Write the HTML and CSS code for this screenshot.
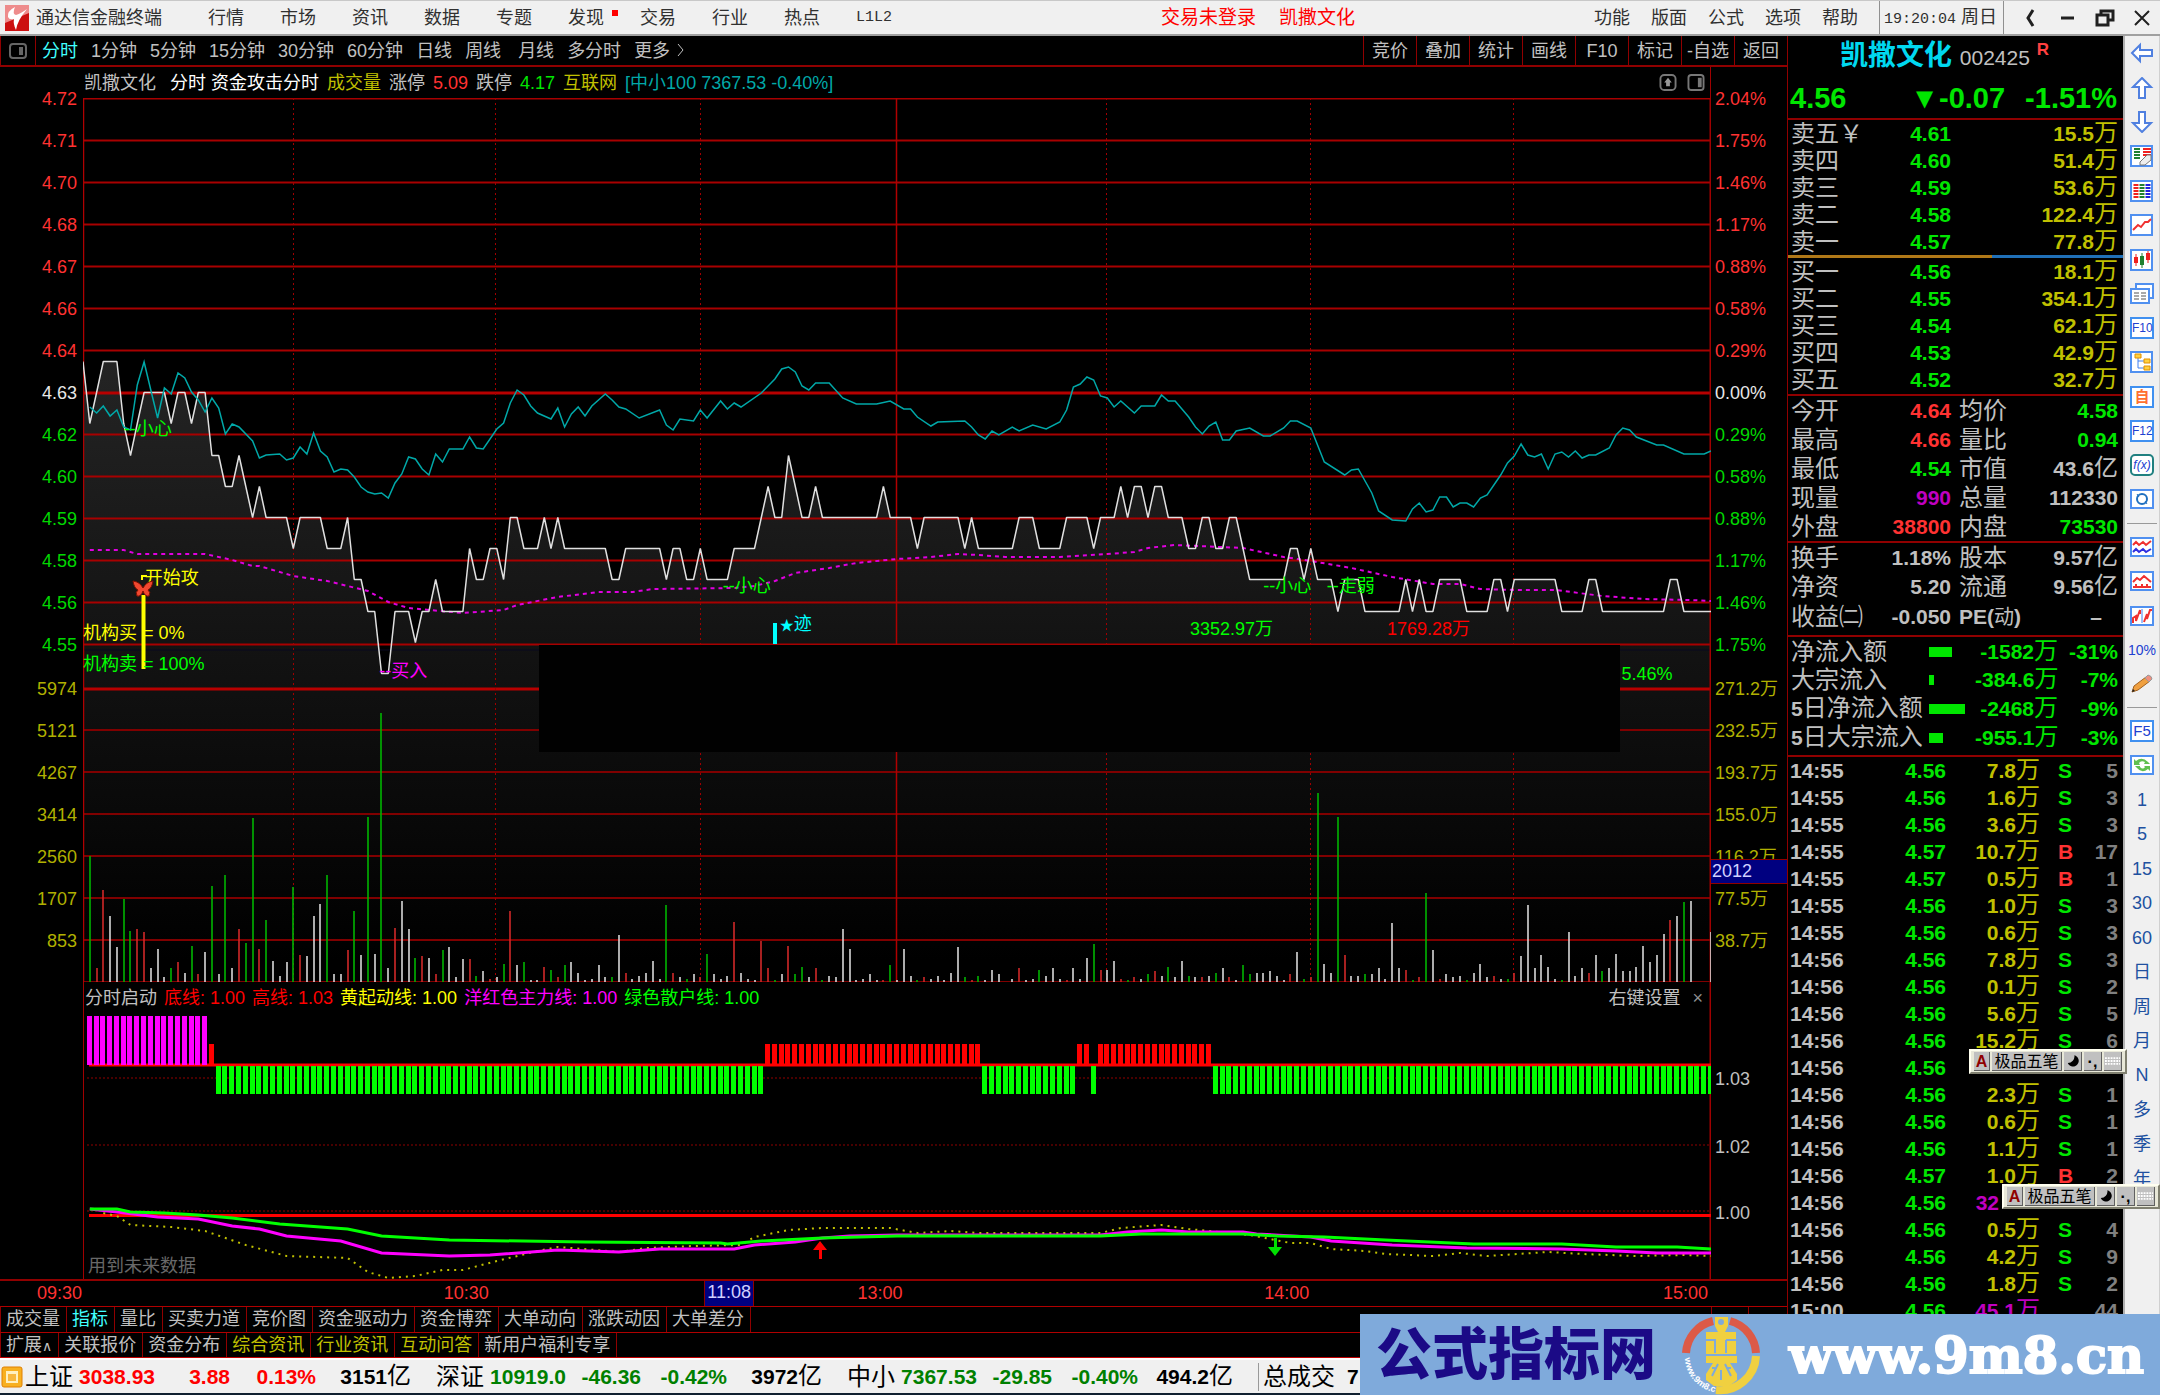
FILE: index.html
```html
<!DOCTYPE html>
<html lang="zh-CN">
<head>
<meta charset="utf-8">
<title>通达信金融终端</title>
<link rel="stylesheet" href="styles.css">
</head>
<body>
<header class="titlebar">
  <svg class="logo" viewBox="0 0 24 26" aria-hidden="true"><rect width="24" height="26" fill="#e04040"/><path d="M0 0H24V12L0 20Z" fill="#ee8c8c"/><path d="M0 18L24 8V26H0Z" fill="#cc1010"/><path d="M10 2Q2 6 3 12Q4 15 9 14Q8 19 11 25Q12 16 22 4Q15 9 11 10Q7 9 10 2Z" fill="#fff"/></svg>
  <h1 class="app-name">通达信金融终端</h1>
  <nav class="menu">
    <a href="#">行情</a><a href="#">市场</a><a href="#">资讯</a><a href="#">数据</a><a href="#">专题</a><a href="#" class="has-dot">发现</a><a href="#">交易</a><a href="#">行业</a><a href="#">热点</a><a href="#" class="mono">L1L2</a>
  </nav>
  <p class="login"><a href="#">交易未登录</a><a href="#">凯撒文化</a></p>
  <nav class="menu menu-right">
    <a href="#">功能</a><a href="#">版面</a><a href="#">公式</a><a href="#">选项</a><a href="#">帮助</a>
  </nav>
  <p class="clock"><span class="mono">19:20:04</span> 周日</p>
  <div class="window-buttons">
    <button aria-label="后退"><svg viewBox="0 0 20 20"><path d="M12 2L7 10L12 18" stroke-width="3"/></svg></button>
    <button aria-label="最小化"><svg viewBox="0 0 20 20"><path d="M3 10H16" stroke-width="3"/></svg></button>
    <button aria-label="还原"><svg viewBox="0 0 20 20"><path d="M6 6V3H18V12H14M2 7H13V17H2Z" stroke-width="3"/></svg></button>
    <button aria-label="关闭"><svg viewBox="0 0 20 20"><path d="M3 3L17 17M17 3L3 17" stroke-width="2"/></svg></button>
  </div>
</header>

<div class="workspace">
  <main class="charts">
    <nav class="periods">
      <button class="panel-toggle" aria-label="侧栏"><svg viewBox="0 0 18 16"><rect x="1" y="1" width="16" height="14" rx="3" fill="none" stroke="#666" stroke-width="2"/><rect x="10" y="4" width="4" height="8" fill="#666"/></svg></button>
      <div class="period-list">
        <button class="active">分时</button><button>1分钟</button><button>5分钟</button><button>15分钟</button><button>30分钟</button><button>60分钟</button><button>日线</button><button>周线</button><button>月线</button><button>多分时</button><button>更多<svg class="more" viewBox="0 0 9 14"><path d="M2 1L7 7L2 13" fill="none" stroke="#c0c0c0"/></svg></button>
      </div>
      <div class="chart-actions">
        <button>竞价</button><button>叠加</button><button>统计</button><button>画线</button><button>F10</button><button>标记</button><button>-自选</button><button>返回</button>
      </div>
    </nav>

    <div class="price-chart">
      <div class="axis axis-left">
        <ol class="up"><li>4.72</li><li>4.71</li><li>4.70</li><li>4.68</li><li>4.67</li><li>4.66</li><li>4.64</li><li class="flat">4.63</li><li class="down">4.62</li><li class="down">4.60</li><li class="down">4.59</li><li class="down">4.58</li><li class="down">4.56</li><li class="down">4.55</li></ol>
        <ol class="volume"><li>5974</li><li>5121</li><li>4267</li><li>3414</li><li>2560</li><li>1707</li><li>853</li></ol>
      </div>
      <div class="plot-column">
        <div class="info">
          <span class="stock">凯撒文化</span><span class="white">分时 资金攻击分时</span><span class="olive">成交量</span><span>涨停</span><span class="red">5.09</span><span>跌停</span><span class="green">4.17</span><span class="olive">互联网</span><span class="teal">[中小100 7367.53 -0.40%]</span>
          <span class="info-icons">
            <svg viewBox="0 0 18 18"><rect x="1" y="1" width="16" height="16" rx="4" fill="none" stroke="#777" stroke-width="2"/><path d="M9 4L13 9H11V13H7V9H5Z" fill="#999"/></svg>
            <svg viewBox="0 0 18 18"><rect x="1" y="1" width="16" height="16" rx="3" fill="none" stroke="#777" stroke-width="2"/><rect x="11" y="4" width="4" height="10" fill="#777"/></svg>
          </span>
        </div>
        <div class="plot">
          <svg id="price-plot" viewBox="83 98 1628 884" preserveAspectRatio="none" role="img" aria-label="分时走势与成交量">
            <defs><linearGradient id="shade" gradientUnits="userSpaceOnUse" x1="0" y1="361" x2="0" y2="960"><stop offset="0" stop-color="#242424"/><stop offset="1" stop-color="#000"/></linearGradient></defs>
          </svg>
          <div class="hidden-block"></div>
          <span class="note lime n1">--小心</span>
          <span class="note yellow n2">开始攻</span>
          <span class="note yellow n3">机构买<b></b>= 0%</span>
          <span class="note lime n4">机构卖<b></b>= 100%</span>
          <span class="note magenta n5">--买入</span>
          <span class="note lime n6">--小心</span>
          <span class="note cyan n7"><small>★</small>迹</span>
          <span class="note lime n8">--小心</span>
          <span class="note lime n9">--走弱</span>
          <span class="note lime n10">3352.97万</span>
          <span class="note signal n11">1769.28万</span>
          <span class="note lime n12">5.46%</span>
          <svg class="butterfly" viewBox="0 0 22 18"><path d="M1 1Q8 2 11 8Q14 2 21 1Q20 8 16 10Q19 12 17 16Q13 17 11 11Q9 17 5 16Q3 12 6 10Q2 8 1 1Z" fill="#f04830" stroke="#801000"/></svg>
        </div>
      </div>
      <div class="axis axis-right">
        <ol class="up"><li>2.04%</li><li>1.75%</li><li>1.46%</li><li>1.17%</li><li>0.88%</li><li>0.58%</li><li>0.29%</li><li class="flat">0.00%</li><li class="down">0.29%</li><li class="down">0.58%</li><li class="down">0.88%</li><li class="down">1.17%</li><li class="down">1.46%</li><li class="down">1.75%</li></ol>
        <ol class="volume"><li>271.2万</li><li>232.5万</li><li>193.7万</li><li>155.0万</li><li>116.2万</li><li>77.5万</li><li>38.7万</li></ol>
        <span class="cursor-value">2012</span>
      </div>
    </div>

    <div class="indicator">
      <div class="indicator-axis"></div>
      <div class="indicator-plot">
        <svg id="indicator-plot" viewBox="83 982 1628 297" preserveAspectRatio="none" role="img" aria-label="分时启动"></svg>
        <div class="indicator-head">
          <span>分时启动</span><span class="signal">底线: 1.00</span><span class="signal">高线: 1.03</span><span class="yellow">黄起动线: 1.00</span><span class="magenta">洋红色主力线: 1.00</span><span class="lime">绿色散户线: 1.00</span>
          <span class="settings">右键设置</span><button class="close" aria-label="关闭指标">×</button>
        </div>
        <span class="future">用到未来数据</span>
      </div>
      <div class="indicator-axis scale"><span class="s1">1.03</span><span class="s2">1.02</span><span class="s3">1.00</span></div>
    </div>

    <div class="times"><span>09:30</span><span>10:30</span><span>13:00</span><span>14:00</span><span>15:00</span><i></i><span class="cursor-time">11:08</span></div>

    <nav class="tabs"><button>成交量</button><button class="active">指标</button><button>量比</button><button>买卖力道</button><button>竞价图</button><button>资金驱动力</button><button>资金博弈</button><button>大单动向</button><button>涨跌动因</button><button>大单差分</button><i class="tab-end"></i></nav>
    <nav class="tabs"><button>扩展<span class="caret">∧</span></button><button>关联报价</button><button>资金分布</button><button class="olive">综合资讯</button><button class="olive">行业资讯</button><button class="olive">互动问答</button><button>新用户福利专享</button></nav>
  </main>

  <aside class="quote">
    <header class="quote-head">
      <h2>凯撒文化 <small>002425</small><sup>R</sup></h2>
      <p><span>4.56</span><span class="change">▼-0.07</span><span>-1.51%</span></p>
    </header>
    <table class="book sell">
      <tr><th>卖五￥</th><td>4.61</td><td>15.5<i>万</i></td></tr>
      <tr><th>卖四</th><td>4.60</td><td>51.4<i>万</i></td></tr>
      <tr><th>卖三</th><td>4.59</td><td>53.6<i>万</i></td></tr>
      <tr><th>卖二</th><td>4.58</td><td>122.4<i>万</i></td></tr>
      <tr><th>卖一</th><td>4.57</td><td>77.8<i>万</i></td></tr>
    </table>
    <div class="balance"></div>
    <table class="book buy">
      <tr><th>买一</th><td>4.56</td><td>18.1<i>万</i></td></tr>
      <tr><th>买二</th><td>4.55</td><td>354.1<i>万</i></td></tr>
      <tr><th>买三</th><td>4.54</td><td>62.1<i>万</i></td></tr>
      <tr><th>买四</th><td>4.53</td><td>42.9<i>万</i></td></tr>
      <tr><th>买五</th><td>4.52</td><td>32.7<i>万</i></td></tr>
    </table>
    <div class="block">
      <table class="stats">
        <tr><th>今开</th><td class="red">4.64</td><th>均价</th><td class="green">4.58</td></tr>
        <tr><th>最高</th><td class="red">4.66</td><th>量比</th><td class="green">0.94</td></tr>
        <tr><th>最低</th><td class="green">4.54</td><th>市值</th><td>43.6<i>亿</i></td></tr>
        <tr><th>现量</th><td class="purple">990</td><th>总量</th><td>112330</td></tr>
        <tr><th>外盘</th><td class="red">38800</td><th>内盘</th><td class="green">73530</td></tr>
      </table>
    </div>
    <div class="block finance">
      <table class="stats">
        <tr><th>换手</th><td>1.18%</td><th>股本</th><td>9.57<i>亿</i></td></tr>
        <tr><th>净资</th><td>5.20</td><th>流通</th><td>9.56<i>亿</i></td></tr>
        <tr><th>收益㈡</th><td>-0.050</td><th><b>PE(</b><small>动</small><b>)</b></th><td><span class="dash">–</span></td></tr>
      </table>
    </div>
    <div class="block flow-block">
      <table class="flow">
        <tr><th>净流入额</th><td><span class="bar" style="width:23px"></span></td><td>-1582<i>万</i></td><td>-31%</td></tr>
        <tr><th>大宗流入</th><td><span class="bar" style="width:5px"></span></td><td>-384.6<i>万</i></td><td>-7%</td></tr>
        <tr><th><b>5</b>日净流入额</th><td><span class="bar" style="width:36px"></span></td><td>-2468<i>万</i></td><td>-9%</td></tr>
        <tr><th><b>5</b>日大宗流入</th><td><span class="bar" style="width:14px"></span></td><td>-955.1<i>万</i></td><td>-3%</td></tr>
      </table>
    </div>
    <table class="ticks">
      <tr><td>14:55</td><td>4.56</td><td>7.8<i>万</i></td><td>S</td><td>5</td></tr>
      <tr><td>14:55</td><td>4.56</td><td>1.6<i>万</i></td><td>S</td><td>3</td></tr>
      <tr><td>14:55</td><td>4.56</td><td>3.6<i>万</i></td><td>S</td><td>3</td></tr>
      <tr class="b"><td>14:55</td><td>4.57</td><td>10.7<i>万</i></td><td>B</td><td>17</td></tr>
      <tr class="b"><td>14:55</td><td>4.57</td><td>0.5<i>万</i></td><td>B</td><td>1</td></tr>
      <tr><td>14:55</td><td>4.56</td><td>1.0<i>万</i></td><td>S</td><td>3</td></tr>
      <tr><td>14:55</td><td>4.56</td><td>0.6<i>万</i></td><td>S</td><td>3</td></tr>
      <tr><td>14:56</td><td>4.56</td><td>7.8<i>万</i></td><td>S</td><td>3</td></tr>
      <tr><td>14:56</td><td>4.56</td><td>0.1<i>万</i></td><td>S</td><td>2</td></tr>
      <tr><td>14:56</td><td>4.56</td><td>5.6<i>万</i></td><td>S</td><td>5</td></tr>
      <tr><td>14:56</td><td>4.56</td><td>15.2<i>万</i></td><td>S</td><td>6</td></tr>
      <tr><td>14:56</td><td>4.56</td><td></td><td></td><td></td></tr>
      <tr><td>14:56</td><td>4.56</td><td>2.3<i>万</i></td><td>S</td><td>1</td></tr>
      <tr><td>14:56</td><td>4.56</td><td>0.6<i>万</i></td><td>S</td><td>1</td></tr>
      <tr><td>14:56</td><td>4.56</td><td>1.1<i>万</i></td><td>S</td><td>1</td></tr>
      <tr class="b"><td>14:56</td><td>4.57</td><td>1.0<i>万</i></td><td>B</td><td>2</td></tr>
      <tr class="big"><td>14:56</td><td>4.56</td><td class="cut">32</td><td></td><td></td></tr>
      <tr><td>14:56</td><td>4.56</td><td>0.5<i>万</i></td><td>S</td><td>4</td></tr>
      <tr><td>14:56</td><td>4.56</td><td>4.2<i>万</i></td><td>S</td><td>9</td></tr>
      <tr><td>14:56</td><td>4.56</td><td>1.8<i>万</i></td><td>S</td><td>2</td></tr>
      <tr class="big"><td>15:00</td><td>4.56</td><td>45.1<i>万</i></td><td></td><td>44</td></tr>
    </table>
  </aside>

  <nav class="tools">
    <div class="tool-group first">
      <button aria-label="左"><svg viewBox="0 0 24 22"><path d="M2 11L10 3V8H22V14H10V19Z" class="arrow"/></svg></button>
      <button aria-label="上"><svg viewBox="0 0 24 22"><path d="M12 1L21 10H15V21H9V10H3Z" class="arrow"/></svg></button>
      <button aria-label="下"><svg viewBox="0 0 24 22"><path d="M12 21L21 12H15V1H9V12H3Z" class="arrow"/></svg></button>
      <button aria-label="报价"><svg viewBox="0 0 24 22"><path class="frame" d="M1 1H22V21H1Z"/><path d="M4 4H10M4 7H10M4 10H10M4 13H10" stroke="#208030" stroke-width="2"/><path d="M13 4H21M13 7H21M13 10H21" stroke="#f02020" stroke-width="2"/><path d="M10 17L17 10H21V15L15 20H10Z" fill="#eee" stroke="#777"/></svg></button>
      <button aria-label="行情"><svg viewBox="0 0 24 22"><path class="frame" d="M1 1H22V21H1Z"/><g stroke-width="5" stroke-dasharray="2 1"><path d="M6 4V19" stroke="#f02020"/><path d="M12 4V19" stroke="#208030"/><path d="M18 4V19" stroke="#2020e0"/></g></svg></button>
      <button aria-label="分时图"><svg viewBox="0 0 24 22"><path class="frame" d="M1 1H22V21H1Z"/><path class="r" d="M3 16L8 11L11 13L15 8H18L21 5"/></svg></button>
      <button aria-label="K线"><svg viewBox="0 0 24 22"><path class="frame" d="M1 1H22V21H1Z"/><path d="M6 5V17M18 2V14" stroke="#f02020"/><path d="M4 8H8V14H4ZM16 4H20V11H16Z" fill="#f02020"/><path d="M12 4V19" stroke="#208030"/><path d="M10 7H14V16H10Z" fill="#208030"/></svg></button>
      <button aria-label="资讯"><svg viewBox="0 0 24 22"><path class="frame" d="M6 1H23V15H6Z"/><path class="frame" d="M1 6H19V20H1Z"/><path d="M4 10H9M11 10H16M4 13H9M11 13H16M4 16H9M11 16H16" stroke="#555"/></svg></button>
      <button class="box">F10</button>
      <button aria-label="树"><svg viewBox="0 0 24 22"><path class="frame" d="M1 1H22V21H1Z"/><path d="M8 5V17H15M8 10H15" fill="none" stroke="#4080f0"/><path d="M5 3H11V7H5ZM14 8H20V12H14ZM14 15H20V19H14Z" fill="#ffd040" stroke="#e09000"/></svg></button>
      <button class="box orange">自</button>
      <button class="box">F12</button>
      <button class="box fx">f(x)</button>
      <button aria-label="刷新"><svg viewBox="0 0 24 22"><path class="frame" d="M1 2H23V20H1Z"/><circle cx="12" cy="11" r="5" fill="none" stroke="#2070c0" stroke-width="2"/><path d="M7 6L9 9M15 13L17 16" stroke="#2070c0"/></svg></button>
    </div>
    <div class="tool-group second">
      <button aria-label="多线"><svg viewBox="0 0 24 22"><path class="frame" d="M1 2H23V20H1Z"/><path class="r" d="M3 9L6 6L9 9L13 6L16 9L21 5"/><path d="M3 16L6 13L9 16L13 13L16 16L21 13" fill="none" stroke="#3030e0" stroke-width="2"/></svg></button>
      <button aria-label="面积"><svg viewBox="0 0 24 22"><path class="frame" d="M1 2H23V20H1Z"/><path class="r" d="M3 12L7 8L10 10L14 6L21 12M3 17H21M6 17V14M12 17V14M17 17V14"/></svg></button>
      <button aria-label="对比"><svg viewBox="0 0 24 22"><path class="frame" d="M1 2H23V20H1Z"/><path class="r" d="M3 18V13L6 11V16L10 5V9M14 17L17 9V14L20 5H22"/><path d="M12 4V18" stroke="#4080f0"/></svg></button>
      <button class="plain">10%</button>
      <button aria-label="画笔"><svg viewBox="0 0 24 22"><path d="M2 19L4 13L16 4L20 8L8 17Z" fill="#f0a040" stroke="#a06020"/><path d="M15 5L18 2Q22 3 22 6L19 9Z" fill="#f09080" stroke="#999"/><path d="M2 19L3 16L5 18Z" fill="#222"/></svg></button>
    </div>
    <div class="tool-group third">
      <button class="box f5">F5</button>
      <button aria-label="同步"><svg viewBox="0 0 24 22"><path class="frame" d="M1 2H23V20H1Z"/><path d="M4 5L6 7Q12 2 18 8L20 10H14L15 8Q11 6 9 9L10 11H4ZM20 17L18 15Q12 20 7 14L5 12H10L10 13Q13 16 15 13L14 12H20Z" fill="#60c050"/></svg></button>
      <button>1</button><button>5</button><button>15</button><button>30</button><button>60</button><button>日</button><button>周</button><button>月</button><button>N</button><button>多</button><button>季</button><button>年</button>
    </div>
  </nav>
</div>

<footer class="status">
  <svg class="coin" viewBox="0 0 22 22"><rect x="1" y="1" width="20" height="20" rx="2" fill="#f8b020" stroke="#e08000"/><rect x="5" y="5" width="12" height="12" fill="#fff0c0"/><rect x="7" y="8" width="8" height="7" fill="#f8b840"/></svg>
  <p class="index rise"><span>上证</span><b>3038.93</b><b>3.88</b><b>0.13%</b><b class="amount">3151<i>亿</i></b></p>
  <p class="index fall"><span>深证</span><b>10919.0</b><b>-46.36</b><b>-0.42%</b><b class="amount">3972<i>亿</i></b></p>
  <p class="index fall"><span>中小</span><b>7367.53</b><b>-29.85</b><b>-0.40%</b><b class="amount">494.2<i>亿</i></b></p>
  <p class="total"><span>总成交</span><b>7</b></p>
</footer>

<div class="ime ime-a"><b>A</b><span>极品五笔</span><svg viewBox="0 0 18 18"><path d="M11 3A6 6 0 1 1 4 11A7 7 0 0 0 11 3Z" fill="#000"/></svg><em>·,</em><svg viewBox="0 0 18 18"><path d="M1 6H17M1 9H17M1 12H17" stroke="#fff" stroke-width="2" stroke-dasharray="2 1"/></svg></div>
<div class="ime ime-b"><b>A</b><span>极品五笔</span><svg viewBox="0 0 18 18"><path d="M11 3A6 6 0 1 1 4 11A7 7 0 0 0 11 3Z" fill="#000"/></svg><em>·,</em><svg viewBox="0 0 18 18"><path d="M1 6H17M1 9H17M1 12H17" stroke="#fff" stroke-width="2" stroke-dasharray="2 1"/></svg></div>

<div class="banner">
  <strong>公式指标网</strong>
  <svg class="emblem" viewBox="0 0 78 78">
    <path d="M31 5A35 35 0 0 0 4 37" fill="none" stroke="#dc5a48" stroke-width="8"/><path d="M48 5A35 35 0 0 1 74 37" fill="none" stroke="#dc5a48" stroke-width="8"/>
    <path d="M74 40A36 36 0 0 1 34 74" fill="none" stroke="#f0d040" stroke-width="8"/>
    <path d="M33 1H46V10L43 16H54V38H24V16H36L33 10Z" fill="#f0d040"/><circle cx="39" cy="6" r="3" fill="#7faadb"/>
    <path d="M24 40H55V47H48L55 58V64L47 70H32L24 64V58L31 47H24Z" fill="#f0d040"/>
    <path d="M24 24H34M44 24H54M33 24V37M44 24V37M36 48L30 60M43 48L49 60M39 54V64M30 52H35M44 52H49" fill="none" stroke="#7faadb" stroke-width="2"/>
    <path id="rim" d="M3 42A36 36 0 0 0 32 76" fill="none"/><text font-size="9" font-weight="bold" fill="#fff"><textPath href="#rim">www.9m8.cn</textPath></text>
  </svg>
  <span>www.9m8.cn</span>
</div>
<script src="chart.js"></script>
</body>
</html>
```

FILE: styles.css
```css
* { box-sizing: border-box; }
body, h1, h2, p, ol { margin: 0; padding: 0; font-weight: normal; }
ol { list-style: none; }
body {
  position: relative;
  display: flex;
  flex-direction: column;
  min-height: 100vh;
  background: #000;
  color: #c0c0c0;
  font: 18px/24px "Liberation Sans", "Noto Sans CJK SC", sans-serif;
  overflow-x: hidden;
}
button { background: none; border: 0; padding: 0; color: inherit; font: inherit; white-space: nowrap; }
a { color: inherit; text-decoration: none; }
i, em { font-style: normal; }
.mono { font-family: "Liberation Mono", monospace; font-size: 15px; }

.red { color: #ff3232; }
.green { color: #00e600; }
.lime { color: #0f0; }
.yellow { color: #ff0; }
.olive { color: #c0c000; }
.teal { color: #00a8a8; }
.cyan { color: #0ff; }
.magenta { color: #f0f; }
.purple { color: #c000c0; }
.signal { color: #f00; }
.white { color: #fff; }

/* Title bar */
.titlebar {
  display: flex;
  align-items: center;
  height: 36px;
  padding-left: 5px;
  background: #f0f0f0;
  border-top: 1px solid #c8c8c8;
  border-bottom: 2px solid #a0a0a0;
  color: #303030;
}
.logo { width: 24px; height: 26px; }
.app-name { margin-left: 7px; font-size: 18px; width: 172px; }
.menu { display: flex; }
.menu a { width: 72px; }
.has-dot { position: relative; }
.has-dot::after { content: ""; position: absolute; left: 44px; top: 4px; width: 6px; height: 6px; background: #f00; }
.login { display: flex; gap: 23px; color: #f00; margin-left: 233px; flex: 1; font-size: 19px; }
.menu-right a { width: 57px; }
.clock { border: solid #909090; border-width: 0 1px; height: 100%; width: 125px; line-height: 33px; padding-left: 4px; }
.window-buttons { display: flex; gap: 17px; padding: 0 8px 0 17px; }
.window-buttons svg { display: block; width: 20px; height: 20px; fill: none; stroke: #202020; }

/* Workspace columns */
.workspace { flex: 1; display: grid; grid-template-columns: minmax(0, 1fr) 336px 37px; }
.charts { display: flex; flex-direction: column; }

.periods { display: flex; height: 31px; border-bottom: 2px solid #900000; border-left: 1px solid #900000; line-height: 31px; }
.panel-toggle { width: 35px; border-right: 1px solid #900000; }
.panel-toggle svg { display: block; width: 18px; height: 16px; margin: auto; }
.period-list { display: flex; gap: 13px; flex: 1; padding-left: 6px; }
.period-list button:nth-child(9) { margin-left: 4px; }
.period-list .active, .tabs .active { color: #40ffff; }
.more { width: 9px; height: 14px; margin-left: 6px; }
.chart-actions { display: flex; }
.chart-actions button { width: 53px; border-left: 1px solid #900000; }

/* Price and volume */
.price-chart { display: grid; grid-template-columns: 83px minmax(0, 1fr) 76px; }
.axis { padding-top: 11px; line-height: 42px; }
.axis-left { text-align: right; padding-right: 6px; }
.axis-right { position: relative; padding-left: 4px; }
.up { color: #ff3232; }
.axis .down { color: #00d800; }
.axis .flat { color: #e8e8e8; }
.volume { margin-top: 2px; color: #b0b000; }
.cursor-value { position: absolute; left: 0; right: 0; top: 792px; height: 25px; padding-left: 1px; line-height: 22px; background: #000080; border: solid #900000; border-width: 1px 0; color: #d0d0ff; }
.plot-column { display: flex; flex-direction: column; }
.info { display: flex; gap: 8px; height: 31px; line-height: 32px; border-right: 1px solid #a00000; padding-left: 1px; white-space: nowrap; }
.info .stock { margin-right: 6px; }
.info-icons { display: flex; gap: 10px; align-items: center; margin: 0 5px 0 auto; }
.info-icons svg { width: 18px; height: 17px; }
.plot { position: relative; height: 884px; }
.plot > svg:first-child, .indicator-plot > svg { position: absolute; left: 0; top: 0; width: 100%; height: 100%; }
.hidden-block { position: absolute; left: 28%; right: 91px; top: 547px; height: 107px; background: #010101; }
.note { position: absolute; line-height: 24px; white-space: nowrap; }
.note b { display: inline-block; width: 6px; }
.note small { font-size: 14px; }
.n1 { left: 2.5%; top: 319px; }
.n2 { left: 3.8%; top: 468px; }
.n3 { left: 0; top: 523px; }
.n4 { left: 0; top: 554px; }
.n5 { left: 18.2%; top: 561px; }
.n6 { left: 39.3%; top: 476px; }
.n7 { left: 42.8%; top: 514px; }
.n8 { left: 72.5%; top: 476px; }
.n9 { left: 76.4%; top: 476px; }
.n10 { left: 68%; top: 519px; }
.n11 { left: 80.1%; top: 519px; }
.n12 { left: 94.5%; top: 564px; }
.butterfly { position: absolute; left: 3%; top: 482px; width: 22px; height: 18px; }

/* Indicator */
.indicator { flex: 1; display: grid; grid-template-columns: 83px minmax(0, 1fr) 76px; min-height: 297px; }
.indicator-plot { position: relative; }
.indicator-head { position: relative; display: flex; gap: 7px; padding: 4px 8px 0 2px; white-space: nowrap; }
.indicator-head .settings { margin-left: auto; }
.indicator-head .close { color: #909090; margin-left: 5px; }
.future { position: absolute; left: 5px; bottom: 1px; color: #686868; }
.scale { position: relative; }
.scale span { position: absolute; left: 4px; }
.s1 { top: 85px; }
.s2 { top: 153px; }
.s3 { top: 219px; }

.times { position: relative; display: grid; grid-template-columns: 82px 407fr 414fr 407fr 399fr 79px; height: 27px; line-height: 24px; text-align: right; color: #ff3232; border-top: 2px solid #900000; }
.times .cursor-time { position: absolute; left: 39.4%; width: 50px; height: 25px; line-height: 23px; text-align: center; background: #000080; border: solid #900000; border-width: 0 1px; color: #d0d0ff; }

.tabs { display: flex; height: 26px; line-height: 25px; border-top: 1px solid #b00000; border-left: 1px solid #900000; }
.tabs button { padding: 0 6px 0 5px; border-right: 1px solid #900000; }
.caret { font-family: "DejaVu Sans", sans-serif; font-size: 14px; }
.tab-end { width: 38px; margin: 0 38px 0 auto; border: solid #900000; border-width: 0 1px; }

/* Quote panel */
.quote { border-left: 1px solid #900000; font-size: 21px; font-weight: bold; }
.quote-head { height: 84px; border-bottom: 2px solid #900000; color: #00e600; }
.quote-head h2 { color: #00d8f0; font-size: 28px; line-height: 40px; padding-left: 52px; height: 40px; font-weight: bold; white-space: nowrap; }
.quote-head small { font-size: 21px; color: #c0c0c0; font-weight: normal; }
.quote-head sup { font-size: 17px; color: #ff4040; font-weight: bold; margin-left: 7px; line-height: 1px; }
.quote-head p { display: flex; font-size: 29px; line-height: 44px; padding: 0 6px 0 2px; font-weight: bold; }
.quote-head .change { margin: 0 20px 0 auto; }
.quote table { width: 100%; table-layout: fixed; border-collapse: collapse; line-height: 27px; }
.quote th, .quote td { padding: 0; height: 27px; text-align: right; white-space: nowrap; }
.quote th { text-align: left; font-weight: normal; font-size: 24px; padding-left: 3px; }
.quote i { font-weight: normal; font-size: 24px; line-height: 20px; }
.quote td:last-child { padding-right: 5px; }
.book th, .stats th:first-child { width: 75px; }
.book td:nth-child(2) { width: 88px; color: #00e600; }
.book td:last-child { color: #c0c000; }
.balance { height: 3px; background: linear-gradient(90deg, #b07818 61%, #2070b8 61%); }
.quote .buy { margin-bottom: 1px; }
.block { border-top: 2px solid #900000; }
.quote .stats { line-height: 29px; }
.quote .stats th, .quote .stats td { height: 29px; }
.quote .flow { line-height: 28px; }
.quote .flow th, .quote .flow td { height: 28px; }
.finance { padding-bottom: 3px; }
.flow-block { padding: 1px 0 3px; border-bottom: 2px solid #900000; }
.stats td:nth-child(2) { width: 88px; }
.quote .stats th:nth-child(3) { width: 76px; padding-left: 8px; }
.stats th b { font-size: 21px; }
.stats th small { font-size: 20px; }
.dash { padding-right: 16px; }
.flow { color: #00e600; }
.flow th { width: 141px; color: #c0c0c0; }
.flow th b { font-size: 21px; }
.flow td:nth-child(2) { width: 46px; text-align: left; }
.flow td:nth-child(3) { width: 83px; }
.flow .bar { display: block; height: 10px; background: #00e600; }
.quote .ticks td:nth-child(1) { width: 75px; text-align: left; padding-left: 2px; }
.ticks td:nth-child(2) { width: 83px; color: #00e600; }
.ticks td:nth-child(3) { width: 94px; color: #c0c000; }
.quote .ticks td:nth-child(4) { width: 45px; color: #00e600; text-align: left; padding-left: 18px; }
.ticks td:nth-child(5) { color: #808080; }
.quote .ticks .b td:nth-child(4) { color: #ff3232; }
.ticks .big td:nth-child(3) { color: #c000c0; }
.quote .ticks .cut { padding-right: 41px; }

/* Tool strip */
.tools { background: #f0f0f0; border-left: 2px solid #b0b0b0; border-right: 1px solid #d0d0d0; color: #2050a0; font-size: 18px; }
.tool-group { display: flex; flex-direction: column; align-items: center; }
.tool-group button { flex: 1; min-height: 0; }
.first { height: 480px; }
.second { height: 185px; margin: 7px 2px 6px; padding: 6px 0; border: solid #999; border-width: 1px 0; }
.third { height: 482px; }
.tools svg { display: block; width: 24px; height: 22px; }
.frame { fill: #fff; stroke: #5090f0; stroke-width: 2; }
.arrow { fill: #fff; stroke: #5080e0; stroke-width: 2; }
.r { fill: none; stroke: #f03030; stroke-width: 2; }
.tool-group .box { flex: none; width: 24px; height: 22px; margin: 6px 0; border: 2px solid #4090f0; background: #fff; color: #2040d0; font-size: 12px; line-height: 18px; }
.tool-group .orange { color: #ff7030; font-size: 15px; font-weight: bold; }
.tool-group .fx { border-color: #208080; border-radius: 5px; font-style: italic; font-size: 12px; }
.tool-group .f5 { font-size: 15px; }
.plain { font-size: 14px; color: #2040d0; }

/* Status bar */
.status { display: flex; align-items: center; gap: 25px; height: 37px; background: #f0f0f0; border-top: 2px solid #fff; border-bottom: 2px solid #102030; font-size: 21px; color: #000; white-space: nowrap; box-shadow: 0 -1px #c00000; }
.coin { width: 22px; height: 22px; margin: 0 -24px 0 1px; }
.index { display: grid; grid-template-columns: 50px 80px 75px 86px 95px; text-align: right; align-items: center; }
.index span, .total span { font-size: 24px; text-align: left; }
.index i { font-size: 24px; font-weight: normal; line-height: 20px; }
.rise { color: #f00; margin-left: 1px; }
.fall { color: #008000; }
.index span, .index .amount { color: #000; }
.total { display: flex; gap: 12px; border-left: 1px solid #999; padding-left: 4px; line-height: 28px; }

/* Floating input method bars */
.ime { position: absolute; right: 0; display: flex; align-items: center; gap: 2px; width: 158px; height: 25px; padding: 1px 3px; background: #e8e8d8; border: 2px solid #fffff0; border-right-color: #808070; border-bottom-color: #808070; color: #000; font-size: 16px; line-height: 19px; }
.ime > * { height: 19px; background: #c0c0c0; border-right: 1px solid #606060; border-bottom: 1px solid #606060; text-align: center; overflow: hidden; }
.ime b { flex: 1; color: #900000; }
.ime span { width: 70px; white-space: nowrap; }
.ime svg, .ime em { width: 18px; font-weight: bold; }
.ime-a { top: 1049px; right: 33px; }
.ime-b { top: 1184px; }

/* Site banner */
.banner { position: absolute; right: 0; bottom: 0; width: 800px; height: 81px; display: flex; align-items: center; background: #7faadb; padding-left: 16px; white-space: nowrap; }
.banner strong { color: #1b0a86; font-size: 56px; line-height: 80px; font-weight: 900; width: 306px; }
.emblem { width: 78px; height: 78px; overflow: visible; }
.banner span { margin-left: 29px; color: #fff; font: bold 51px/80px "DejaVu Serif", serif; -webkit-text-stroke: 2px #fff; }
```

FILE: chart.js
```js
const NS = "http://www.w3.org/2000/svg";
const LEFT = 83, RIGHT = 1711, STEP = (RIGHT - LEFT) / 240;
const x = minute => LEFT + minute * STEP;

function add(parent, tag, attrs) {
  const el = document.createElementNS(NS, tag);
  for (const key in attrs) el.setAttribute(key, attrs[key]);
  parent.appendChild(el);
}
const path = (parent, d, stroke, width = 1, extra = {}) =>
  add(parent, "path", { d, stroke, "stroke-width": width, fill: "none", ...extra });
const parse = text => text.trim().split(/\s+/).map(pair => pair.split(",").map(Number));
const line = points => "M" + points.map(([m, y]) => `${x(m).toFixed(1)} ${y}`).join("L");

/* minute, ticks below 4.64 */
const price = parse(`0,0 1,2 2,1 3,0 5,0 6,2 7,3 8,2 9,1 12,1 13,2 14,1 15,1 16,2 17,1 18,1 19,3 20,3 21,4 22,4 23,3 24,4 25,5 26,4 27,5 30,5 31,6 32,5 35,5 36,6 38,6 39,5 40,7 41,7 42,8 43,8 44,10 45,10 46,8 48,8 49,9 50,8 51,8 52,7 53,8 56,8 57,6 58,7 59,7 60,6 61,6 62,7 63,5 64,5 65,6 67,6 68,5 69,6 70,5 71,6 77,6 78,7 79,7 80,6 85,6 86,7 87,6 88,6 89,7 90,7 91,6 92,7 95,7 96,6 99,6 100,5 101,4 102,5 103,5 104,3 105,4 106,5 107,5 108,4 109,5 117,5 118,4 119,5 122,5 123,6 124,5 129,5 130,6 131,5 132,6 137,6 138,5 140,5 141,6 144,6 145,5 148,5 149,6 150,5 152,5 153,4 154,5 155,4 156,4 157,5 158,4 159,4 160,5 162,5 163,6 164,6 165,5 166,5 167,6 168,6 169,5 170,5 171,6 172,7 177,7 178,6 179,6 180,7 181,6 182,7 184,7 185,8 186,7 188,7 189,8 194,8 195,7 196,8 197,7 198,8 199,8 200,7 203,7 204,8 207,8 208,7 209,7 210,8 211,7 217,7 218,8 221,8 222,7 223,7 224,8 233,8 234,7 235,7 236,8 240,8`)
  .map(([m, ticks]) => [m, Math.round(361 + ticks * 31.2) + 0.5]);

const market = parse(`1,407 2,413 3,406 4,416 5,410 6,427 7,430 8,385 9,362 10,390 11,418 12,388 13,394 14,373 15,378 16,392 17,400 18,412 19,398 20,408 21,434 22,424 23,427 25,441 26,458 27,455 29,454 30,460 31,458 32,447 33,454 34,433 35,451 36,457 37,472 38,469 39,470 40,477 41,487 42,492 43,494 44,493 45,498 46,483 47,474 48,457 49,459 50,469 51,475 52,454 53,462 54,449 56,449 57,437 58,448 59,449 61,429 62,423 63,403 64,390 65,395 66,406 67,413 69,419 70,408 71,427 72,414 73,407 74,416 75,406 77,394 78,400 79,407 80,409 82,418 85,410 86,425 87,430 88,419 90,421 91,410 92,418 94,401 95,409 96,403 97,407 100,393 102,379 103,369 104,367 105,372 106,386 107,390 108,383 110,383 112,398 114,404 117,404 119,401 121,409 122,409 123,417 125,426 126,422 130,421 131,427 132,435 133,439 134,431 135,435 137,427 138,431 140,425 142,429 144,422 145,410 146,387 147,384 148,377 149,380 150,396 151,398 152,407 153,401 155,413 156,406 158,406 159,395 160,401 161,401 163,417 164,427 165,434 166,426 167,422 168,440 169,440 170,431 172,428 174,436 175,436 177,428 178,421 179,421 181,428 183,462 186,475 187,470 188,469 190,493 191,511 193,520 195,521 196,509 197,503 198,512 199,510 200,497 201,497 202,507 203,503 204,503 205,507 206,498 207,495 209,475 210,463 211,456 212,444 213,455 214,457 215,454 216,469 217,454 218,452 219,457 220,451 221,458 222,455 223,455 225,448 226,435 227,428 228,430 229,437 232,445 233,445 236,454 239,454 240,451`);

const average = parse(`1,550 6,550 8,554 18,554 22,560 25,566 26,566 31,576 36,581 39,586 42,591 45,602 48,608 51,610 56,613 62,610 64,605 70,597 76,592 81,592 84,589 96,588 99,586 102,581 105,573 110,568 114,563 120,559 125,557 129,554 132,555 136,557 144,557 151,554 155,552 157,548 161,545 171,548 177,557 181,561 187,568 193,577 199,584 203,584 206,589 211,590 217,590 224,596 230,599 237,600 240,601`);

/* one bar a minute: colour and height in thirds of a unit */
const volume = `g378 r41 r276 w198 w105 g249 g153 r159 r150 w41 w100 w14 g41 r60 w27 g108 r23 w90 g288 w23 g320 w41 r159 g117 g492 r100 g185 w63 w19 w60 g285 r81 w77 w198 w234 g320 w23 w23 r95 g212 w81 g495 w85 g806 w41 r162 w244 w159 g72 r77 w72 r23 g95 w105 w14 w68 r68 g18 w32 r9 w14 g54 r212 w50 g59 w5 w5 r45 g36 r14 g50 w59 w27 w5 w9 w50 w14 g14 w140 r27 w9 w18 w27 w63 w9 g230 r27 w14 g9 w23 r14 g85 w23 w9 w18 r180 w27 w9 w5 r122 r41 g5 w23 r108 g23 g45 w14 r41 g5 w18 w14 w159 w99 w5 w9 w23 w5 r5 g50 w5 w99 w18 g5 r14 w9 w18 w5 w27 w104 g14 r5 g18 w5 w36 w23 w0 w9 r41 w5 w9 g36 w18 w41 w9 r5 w41 w9 w72 g113 r36 w36 w63 r9 g5 r14 w9 g23 r32 w18 g45 w14 w63 g18 w14 r14 w18 g27 w41 r14 w5 g50 g23 w27 w27 w32 w18 w5 r23 w90 g9 r14 g567 w54 w27 g495 r81 w18 w18 g23 w23 w41 w9 w176 w41 r36 g5 r14 g266 w95 r9 w23 w14 w18 g5 w27 w54 w14 r18 w9 g9 r27 w77 w230 w41 w81 w45 w9 g5 w149 w18 w41 r27 w81 g32 w41 w85 w32 w32 w45 w108 w59 w81 w144 r185 w198 g239 w244 w0 w0 w149`.split(" ");

const plot = document.getElementById("price-plot");
add(plot, "path", { d: line(price) + `L${RIGHT} 982L${LEFT} 982Z`, fill: "url(#shade)" });
for (let row = 0; row < 14; row++) {
  if (row !== 7) path(plot, `M83 ${98.5 + row * 42}H1711`, "#a80000", 2);
}
path(plot, "M83 393H1711M83 689H1711", "#b80000", 3);
path(plot, "M83 650H1711", "#080820");
for (let y = 730; y < 983; y += 42) path(plot, `M83 ${y}H1711`, "#800000", 2);
path(plot, "M293.5 98V982M495.5 98V982M700.5 98V982M1106.5 98V982M1310.5 98V982M1513.5 98V982", "#a00000", 1, { "stroke-dasharray": "2 3" });
path(plot, "M896.5 98V982M83.5 98V982", "#b00000", 1.5);
path(plot, "M1710.5 98V982", "#a00000", 2);
const inks = { g: "#00b400", r: "#d02828", w: "#d8d8d8" };
for (const ink in inks) {
  const d = volume.map((bar, i) => bar[0] === ink && bar !== "w0"
    ? `M${Math.round(x(i + 1))} 982v${-Math.round(bar.slice(1) / 3)}` : "").join("");
  path(plot, d, inks[ink], 1.6);
}
path(plot, line(average), "#e000e0", 2, { "stroke-dasharray": "4 4" });
path(plot, line(price), "#e0e0e0", 1.5, { "stroke-linejoin": "bevel" });
path(plot, line(market), "#00a8a8", 1.5);
path(plot, "M143.5 595V669", "#ff0", 4);
path(plot, "M142 580V576H147", "#ff0", 2);
path(plot, "M775 623V644", "#0ff", 4);

const ind = document.getElementById("indicator-plot");
path(ind, "M83.5 982V1279", "#a00000");
path(ind, "M1710.5 982V1279", "#a00000", 2);
path(ind, "M87 1078H1711M87 1145H1711M87 1211H1711", "#900000", 1, { "stroke-dasharray": "2 2" });
path(ind, "M89 1065H1711", "#f00", 3);
/* first minute, last minute, top, bottom, colour */
[[1, 18, 1016, 1065, "#f0f"], [19, 19, 1044, 1065, "#f00"], [20, 100, 1066, 1094, "#0f0"],
 [101, 132, 1044, 1065, "#f00"], [133, 146, 1066, 1094, "#0f0"], [147, 148, 1044, 1065, "#f00"],
 [149, 149, 1066, 1094, "#0f0"], [150, 166, 1044, 1065, "#f00"], [167, 240, 1066, 1094, "#0f0"]]
  .forEach(([from, to, top, bottom, color]) => {
    let d = "";
    for (let m = from; m <= to; m++) d += `M${Math.round(x(m)) - 0.5} ${top}V${bottom}`;
    path(ind, d, color, 5);
  });
path(ind, "M89 1215.5H1711", "#f00", 3);
path(ind, line(parse(`3,1213 5,1216 7,1225 13,1227 18,1231 24,1245 30,1256 39,1258 42,1272 45,1278 49,1276 53,1270 56,1270 61,1261 67,1251 70,1247 72,1248 79,1252 83,1248 90,1246 97,1245 99,1237 104,1230 109,1228 119,1228 123,1233 128,1231 132,1233 150,1233 153,1228 159,1225 163,1229 172,1235 178,1243 181,1243 184,1249 189,1251 192,1254 199,1256 203,1253 207,1256 216,1252 221,1254 229,1256 236,1255 240,1256`)), "#c0c000", 2, { "stroke-dasharray": "2 5" });
path(ind, line(parse(`1,1209 5,1212 11,1217 17,1219 22,1226 26,1229 30,1236 38,1241 44,1253 54,1256 60,1255 70,1250 79,1252 85,1249 96,1249 99,1245 105,1242 109,1238 113,1236 120,1235 150,1235 154,1232 159,1230 163,1232 171,1232 173,1234 181,1237 184,1241 193,1245 204,1248 218,1249 226,1251 232,1253 240,1253`)), "#f0f", 3);
path(ind, line(parse(`1,1209 5,1209 7,1212 12,1213 17,1215 22,1218 29,1224 39,1229 44,1236 54,1240 74,1242 94,1243 95,1244 100,1241 109,1238 120,1236 150,1236 156,1234 171,1234 176,1236 183,1237 192,1240 205,1244 218,1244 226,1247 235,1247 240,1249`)), "#0f0", 3);
add(ind, "path", { d: "M820 1241L827 1250H822V1259H819V1250H813Z", fill: "#f00" });
add(ind, "path", { d: "M1275 1256L1282 1247H1277V1238H1274V1247H1268Z", fill: "#00e000" });
```
